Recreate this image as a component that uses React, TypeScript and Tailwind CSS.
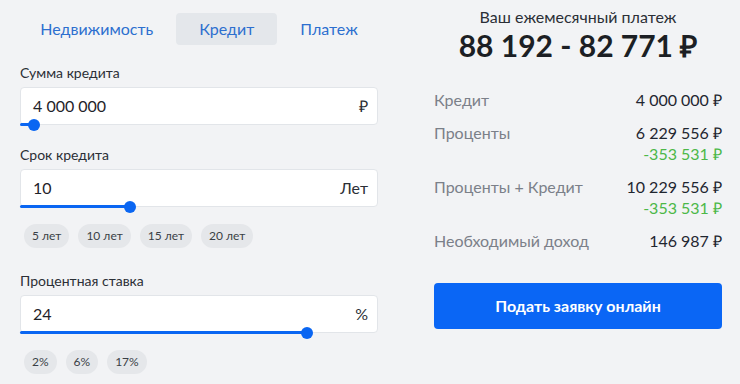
import { useState } from 'react';

const font = { fontFamily: 'Lato, "Open Sans", sans-serif' };

type Field = {
    label: string;
    value: string;
    unit: string;
    percent: number;
    chips: string[];
};

const fields: Field[] = [
    { label: 'Сумма кредита', value: '4 000 000', unit: '₽', percent: 3.6, chips: [] },
    { label: 'Срок кредита', value: '10', unit: 'Лет', percent: 30.7, chips: ['5 лет', '10 лет', '15 лет', '20 лет'] },
    { label: 'Процентная ставка', value: '24', unit: '%', percent: 80.4, chips: ['2%', '6%', '17%'] },
];

function SliderInput({ field }: { field: Field }) {
    return (
        <div className="flex flex-col">
            <div className="text-[14px] leading-[17px] text-[#2b2f36] mb-[6px]">{field.label}</div>
            <div className="relative h-[38px] bg-white border border-[#e2e5e9] rounded-[4px] flex items-center justify-between pl-[12px] pr-[9px]">
                <span className="text-[16px] text-[#1f2329]">{field.value}</span>
                <span className="text-[16px] text-[#2b2f36]">{field.unit}</span>
                <div
                    className="absolute left-[-1px] bottom-[-2px] h-[3px] bg-[#0a66f2] rounded-full"
                    style={{ width: `${field.percent}%` }}
                />
                <div
                    className="absolute bottom-[-7px] w-[12px] h-[12px] -ml-[6px] rounded-full bg-[#0a66f2]"
                    style={{ left: `${field.percent}%` }}
                />
            </div>
            {field.chips.length > 0 && (
                <div className="flex gap-[9px] mt-[17px] mb-[3px] pl-[4px]">
                    {field.chips.map((c) => (
                        <span key={c} className="h-[24px] px-[8px] rounded-full bg-[#e5e7ea] text-[12px] text-[#3a3f46] flex items-center">
                            {c}
                        </span>
                    ))}
                </div>
            )}
        </div>
    );
}

export default function App() {
    const [tab, setTab] = useState('Кредит');
    const tabs = ['Недвижимость', 'Кредит', 'Платеж'];

    return (
        <div className="w-[740px] h-[384px] bg-[#f2f3f5] flex overflow-hidden" style={font}>
            <div className="w-[358px] ml-[20px] flex flex-col pt-[13px]">
                <div className="flex justify-center">
                    {tabs.map((t) => (
                        <button
                            key={t}
                            onClick={() => setTab(t)}
                            className={`h-[32px] px-[23px] rounded-[4px] text-[16px] text-[#2d6fcf] ${tab === t ? 'bg-[#e4e7eb]' : ''}`}
                        >
                            {t}
                        </button>
                    ))}
                </div>
                <div className="flex flex-col gap-[21px] mt-[19px]">
                    {fields.map((f) => (
                        <SliderInput key={f.label} field={f} />
                    ))}
                </div>
            </div>

            <div className="w-[288px] ml-[56px] flex flex-col pt-[6px]">
                <div className="text-center text-[16px] leading-[22px] text-[#2b2f36]">Ваш ежемесячный платеж</div>
                <div className="text-center text-[30px] leading-[34px] font-bold text-[#1c1f24]">88 192 - 82 771 ₽</div>

                <div className="flex flex-col gap-[12px] mt-[27px] text-[16px] leading-[21px]">
                    <div className="flex justify-between">
                        <span className="text-[#7b8089]">Кредит</span>
                        <span className="text-[#1f2630]">4 000 000 ₽</span>
                    </div>
                    <div className="flex justify-between">
                        <span className="text-[#7b8089]">Проценты</span>
                        <div className="flex flex-col items-end">
                            <span className="text-[#1f2630]">6 229 556 ₽</span>
                            <span className="text-[#4cb848]">-353 531 ₽</span>
                        </div>
                    </div>
                    <div className="flex justify-between">
                        <span className="text-[#7b8089]">Проценты + Кредит</span>
                        <div className="flex flex-col items-end">
                            <span className="text-[#1f2630]">10 229 556 ₽</span>
                            <span className="text-[#4cb848]">-353 531 ₽</span>
                        </div>
                    </div>
                    <div className="flex justify-between">
                        <span className="text-[#7b8089]">Необходимый доход</span>
                        <span className="text-[#1f2630]">146 987 ₽</span>
                    </div>
                </div>

                <button className="mt-[32px] h-[46px] rounded-[4px] bg-[#0a66f5] text-white text-[16px] font-bold">
                    Подать заявку онлайн
                </button>
            </div>
        </div>
    );
}
